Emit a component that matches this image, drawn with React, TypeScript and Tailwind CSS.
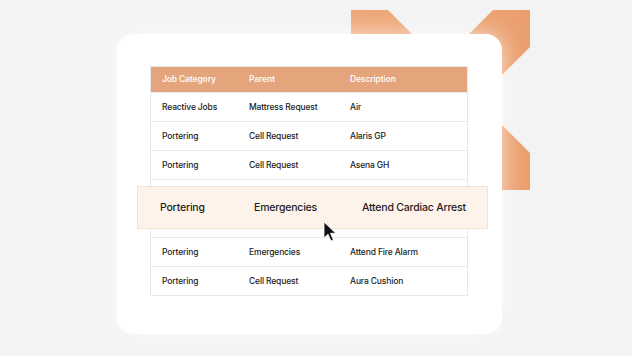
import React from 'react'

const rows = [
  ['Reactive Jobs', 'Mattress Request', 'Air'],
  ['Portering', 'Cell Request', 'Alaris GP'],
  ['Portering', 'Cell Request', 'Asena GH'],
  ['Portering', 'Emergencies', 'Attend Cardiac Arrest'],
  ['Portering', 'Emergencies', 'Attend Cardiac Arrest'],
  ['Portering', 'Emergencies', 'Attend Fire Alarm'],
  ['Portering', 'Cell Request', 'Aura Cushion'],
]

const font = { fontFamily: 'Inter, "Liberation Sans", sans-serif' }

const XShape = () => (
  <svg className="absolute left-[351px] top-[10px]" width="179" height="180" viewBox="0 0 179 180">
    <defs>
      <linearGradient id="xg" x1="0" y1="0" x2="1" y2="0">
        <stop offset="0" stopColor="#eea777" />
        <stop offset="1" stopColor="#eb9f6e" />
      </linearGradient>
    </defs>
    <polygon
      fill="url(#xg)"
      points="0,0 37,0 89.5,52.5 142,0 179,0 179,37 126,90 179,143 179,180 0,180 0,143 53,90 0,37"
    />
  </svg>
)

const Cursor = () => (
  <svg className="absolute left-[206px] top-[187px]" width="14" height="21" viewBox="0 0 14 21">
    <path d="M1 1 L1 17 L5 13.2 L8 20 L10.4 19 L7.5 12.3 L12.8 12.3 Z" fill="#111" stroke="#fff" strokeWidth="0.8" strokeLinejoin="round" />
  </svg>
)

export default function App() {
  return (
    <div className="relative w-[632px] h-[356px] overflow-hidden bg-[#f3f3f4] pt-[34px] pl-[117px]" style={font}>
      <XShape />
      <div className="relative w-[385px] h-[300px] rounded-[16px] bg-white pt-[32px] pl-[33px] shadow-[0_0_24px_rgba(255,255,255,0.7)]">
        <div className="w-[318px] border border-[#e7e6f1] text-[8.5px] tracking-[-0.15px] font-medium text-[#222]">
          <div className="flex h-[25px] items-center bg-[#e4a47c] font-semibold text-white/95">
            <div className="w-[87px] pl-[11px]">Job Category</div>
            <div className="w-[101px] pl-[11px]">Parent</div>
            <div className="flex-1 pl-[11px]">Description</div>
          </div>
          {rows.map((r, i) => (
            <div key={i} className="flex h-[29px] items-center border-t border-[#e7e6f1]">
              <div className="w-[87px] pl-[11px]">{r[0]}</div>
              <div className="w-[101px] pl-[11px]">{r[1]}</div>
              <div className="flex-1 pl-[11px]">{r[2]}</div>
            </div>
          ))}
        </div>
        <div className="absolute left-[20px] top-[152px] flex h-[43px] w-[351px] items-center border border-[#f1e2d4] bg-[#fdf3ea] pl-[22px] text-[10.5px] tracking-[-0.2px] font-medium text-[#1d1d1d]">
          <div className="w-[94px]">Portering</div>
          <div className="w-[108px]">Emergencies</div>
          <div className="flex-1">Attend Cardiac Arrest</div>
        </div>
        <Cursor />
      </div>
    </div>
  )
}
